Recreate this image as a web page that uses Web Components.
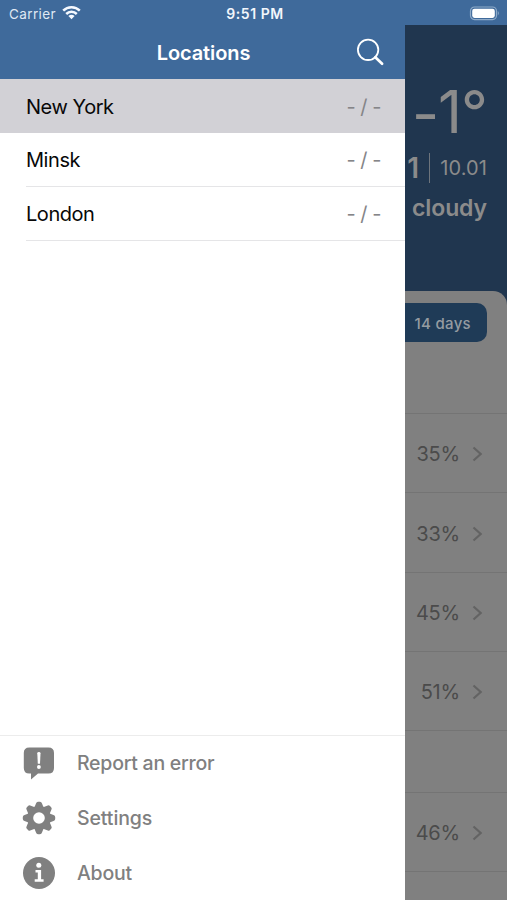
<!DOCTYPE html>
<html lang="en">
<head>
<meta charset="utf-8">
<title>Locations</title>
<style>
body{margin:0;width:507px;height:900px;overflow:hidden;background:#fff;font-family:Inter,"Liberation Sans",sans-serif}
</style>
</head>
<body>
<weather-app></weather-app>
<script>
const define = (name, html) => {
  const tpl = document.createElement('template');
  tpl.innerHTML = html;
  customElements.define(name, class extends HTMLElement {
    constructor() {
      super();
      this.attachShadow({mode: 'open'}).append(tpl.content.cloneNode(true));
    }
  });
};

define('status-bar', `
<style>
:host{display:grid;grid-template-columns:1fr auto 1fr;align-items:center;height:25px;box-sizing:border-box;padding:2px 7px 0 9px;background:#3f6a9b;color:#f2f6fc;font-size:13.500px;line-height:24px}
.left{display:flex;align-items:center;gap:6px;color:#dfe8f3;letter-spacing:.38px}
.time{font-weight:600;letter-spacing:.55px;font-size:14px;margin-right:-1px}
.bat{justify-self:end}
svg{display:block}
</style>
<span class="left"><span>Carrier</span>
<svg width="19" height="15" viewBox="0 0 19 15" style="margin-top:-3px"><g fill="none" stroke="#f5f9ff" stroke-width="2.5"><path d="M1.2 5.700a11.700 11.700 0 0 1 16.600 0"/><path d="M4.200 9a7.600 7.600 0 0 1 10.600 0"/></g><path d="M6.400 11.100a4.500 4.500 0 0 1 6.200 0L9.500 14.300z" fill="#f5f9ff"/></svg></span>
<span class="time">9:51 PM</span>
<svg class="bat" width="31" height="15" viewBox="0 0 31 15" style="margin-top:-2px"><rect x="1.500" y="1" width="26" height="12.600" rx="4" fill="none" stroke="#8fabc9" stroke-width="1.200"/><rect x="3.200" y="2.700" width="22.600" height="9.200" rx="2.300" fill="#fff"/><path d="M28.800 5.100q2 2.200 0 4.400z" fill="#8fabc9"/></svg>`);

define('nav-header', `
<style>
:host{display:grid;grid-template-columns:1fr auto 1fr;align-items:center;height:54px;padding:0 20px 0 22px;box-sizing:border-box;background:#3f6a9b;color:#fff;font-size:20px;font-weight:600}
.t{grid-column:2;letter-spacing:-.1px;padding-top:1px}
svg{justify-self:end;display:block}
</style>
<span class="t"><slot></slot></span>
<svg width="30" height="30" viewBox="0 0 30 30" fill="none" stroke="#fff"><circle cx="13.100" cy="12.800" r="10.200" stroke-width="1.800"/><path d="M20.300 20.200l6.800 6.600" stroke-width="2.700" stroke-linecap="round"/></svg>`);

define('location-row', `
<style>
:host{display:block;height:54px;padding-left:26px;box-sizing:border-box;color:#080808;font-size:20px;letter-spacing:-.45px}
:host([selected]){background:#d2d1d6}
div{display:flex;justify-content:space-between;align-items:center;height:54px;box-sizing:border-box;padding:1px 24px 0 0;border-bottom:1px solid #e5e5e7}
:host([selected]) div{border-color:transparent;padding-top:2px}
.r{color:#858588}
</style>
<div><slot></slot><span class="r">- / -</span></div>`);

define('menu-item', `
<style>
:host{display:flex;align-items:center;height:55px;padding-left:22px;gap:21px;color:#808080;font-size:19.500px;font-weight:500;letter-spacing:-.25px}
</style>
<slot name="icon"></slot><slot></slot>`);

define('side-drawer', `
<style>
:host{display:flex;flex-direction:column;width:405px;background:#fff}
.foot{margin-top:auto;border-top:1px solid #ececec;height:165px;box-sizing:border-box}
.foot menu-item:first-of-type{margin-top:-1px}
svg{display:block;flex:none}
</style>
<nav-header>Locations</nav-header>
<location-row selected>New York</location-row>
<location-row>Minsk</location-row>
<location-row>London</location-row>
<div class="foot">
<menu-item><svg slot="icon" width="34" height="34" viewBox="0 0 34 34"><path d="M7.300 1.500H26.500q5.500 0 5.500 5.500V22q0 5.500-5.500 5.500H16L9 33.500V27.500H7.300q-5.500 0-5.500-5.500V7Q1.800 1.500 7.300 1.500z" fill="#808080"/><path d="M15.300 7.300q0-1.300 1.600-1.300t1.600 1.300l-.5 10.400h-2.200z" fill="#fff"/><circle cx="16.900" cy="21" r="1.900" fill="#fff"/></svg><span>Report an error</span></menu-item>
<menu-item><svg slot="icon" width="34" height="34" viewBox="-17 -17 34 34"><g fill="#808080" id="gear"><circle r="11.900"/></g><circle r="5.800" fill="#fff"/></svg><span style="letter-spacing:-.1px">Settings</span></menu-item>
<menu-item><svg slot="icon" width="34" height="34" viewBox="0 0 34 34"><circle cx="17" cy="17" r="16" fill="#808080"/><circle cx="16.800" cy="9.300" r="2.500" fill="#fff"/><path d="M13.500 14h5.600v9.300h2.500v2.500h-8.900v-2.500h3.100v-6.800h-2.300z" fill="#fff"/></svg><span>About</span></menu-item>
</div>`);

define('forecast-row', `
<style>
:host{display:flex;align-items:center;justify-content:flex-end;gap:12px;padding:2px 24px 0 0;box-sizing:border-box;border-bottom:1px solid #747474;color:#4b4b4b;font-size:20px;letter-spacing:-.2px}
svg{display:block}
:host([empty]) svg{display:none}
</style>
<slot></slot><svg width="11" height="16" viewBox="0 0 11 16"><path d="M1.500 1.500l7.200 6.500-7.200 6.500" fill="none" stroke="#636363" stroke-width="2.200"/></svg>`);

define('weather-panel', `
<style>
:host{display:flex;flex-direction:column;width:102px;overflow:hidden;background:#20364f;color:#8b8b8b}
.now{height:266px;box-sizing:border-box;padding:50px 20px 0 0;display:flex;flex-direction:column;align-items:flex-end;white-space:nowrap}
.temp{display:flex;font-size:59px;line-height:73px;height:73px;letter-spacing:-1px}
.minus{transform:translateY(2px)}
.date{display:flex;align-items:center;height:40px;gap:10px;font-size:20px;letter-spacing:.1px}
.date b{font-size:28px;font-weight:600}
.date i{width:1px;height:30px;background:#6d747c}
.cond{font-size:23px;font-weight:600;line-height:40px;letter-spacing:-.1px}
.sheet{flex:1;background:#808080;border-top-right-radius:14px}
.tabs{height:123px;padding:12px 20px 0 0;box-sizing:border-box;border-bottom:1px solid #747474}
.tab{height:39px;border-radius:0 10px 10px 0;background:#1f3b57;color:#959ba1;font-size:15px;font-weight:500;line-height:41px;text-align:right;padding-right:16px;letter-spacing:.3px}
</style>
<div class="now"><div class="temp"><span class="minus">-</span><span>1°</span></div><div class="date"><b>1</b><i></i><span>10.01</span></div><div class="cond">cloudy</div></div>
<div class="sheet"><div class="tabs"><div class="tab">14 days</div></div>
<forecast-row style="height:79px">35%</forecast-row>
<forecast-row style="height:80px">33%</forecast-row>
<forecast-row style="height:79px">45%</forecast-row>
<forecast-row style="height:79px">51%</forecast-row>
<forecast-row empty style="height:62px"></forecast-row>
<forecast-row style="height:79px">46%</forecast-row>
</div>`);

define('weather-app', `
<style>
:host{display:flex;flex-direction:column;width:507px;height:900px;overflow:hidden}
main{display:flex;flex:1;min-height:0}
</style>
<status-bar></status-bar><main><side-drawer></side-drawer><weather-panel></weather-panel></main>`);

// Eight gear teeth around the hub.
const gear = document.querySelector('weather-app').shadowRoot.querySelector('side-drawer').shadowRoot.getElementById('gear');
for (let i = 0; i < 8; i++) {
  const p = document.createElementNS('http://www.w3.org/2000/svg', 'path');
  p.setAttribute('d', 'M-4.600-10.500L-3-14.500Q-2.500-16.200-1-16.200H1Q2.500-16.200 3-14.500L4.600-10.500z');
  p.setAttribute('transform', `rotate(${i * 45})`);
  gear.append(p);
}
</script>
</body>
</html>
